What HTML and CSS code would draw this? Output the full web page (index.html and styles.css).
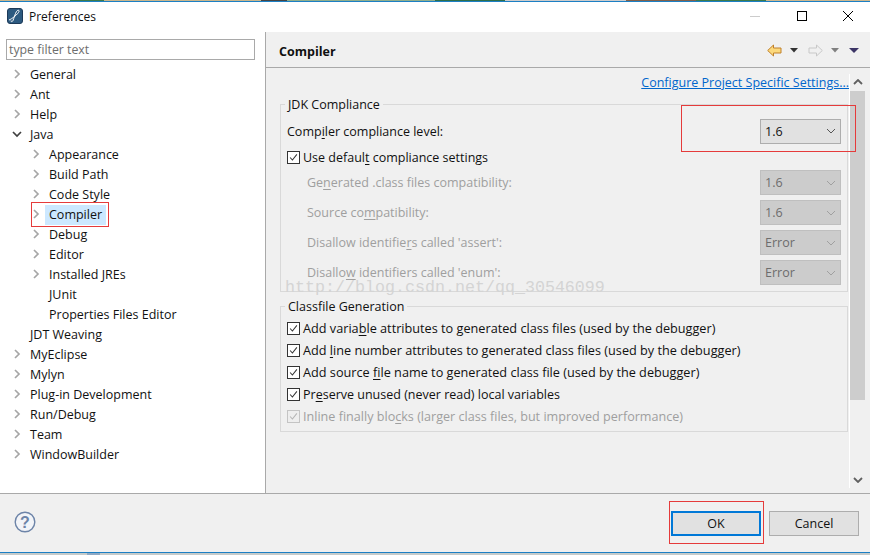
FILE: index.html
```html
<!DOCTYPE html>
<html lang="en">
<head>
<meta charset="utf-8">
<title>Preferences</title>
<link rel="stylesheet" href="styles.css">
</head>
<body>
<div class="window">
  <div class="topstrip"></div>
  <header class="titlebar">
    <div class="title-left">
      <svg class="app-icon" width="16" height="16" viewBox="0 0 16 16"><rect x="0.5" y="0.5" width="15" height="15" rx="2.5" fill="#2d5a80" stroke="#1d3a58"/><path d="M2 12C5 11 11 6 12 3.5C12.6 2 10.5 1.8 9.5 3.5C8 6 7 10 6 12.5C5.4 14 3.6 14 4 12.5" fill="none" stroke="#fff" stroke-width="1"/></svg>
      <span class="title-text">Preferences</span>
    </div>
    <div class="win-controls">
      <svg class="win-btn" width="16" height="16" viewBox="0 0 16 16"><path d="M2 8.5H12" stroke="#ccc" stroke-width="1"/></svg>
      <svg class="win-btn" width="16" height="16" viewBox="0 0 16 16"><rect x="3.5" y="3.5" width="9" height="9" fill="none" stroke="#000" stroke-width="1"/></svg>
      <svg class="win-btn" width="16" height="16" viewBox="0 0 16 16"><path d="M3 3L13 13M13 3L3 13" stroke="#000" stroke-width="1"/></svg>
    </div>
  </header>

  <div class="main">
    <aside class="sidebar">
      <div class="filter">type filter text</div>
      <ul class="tree">
        <li class="row"><svg class="tw" viewBox="0 0 10 10"><path d="M3 1L7 5L3 9" /></svg>General</li>
        <li class="row"><svg class="tw" viewBox="0 0 10 10"><path d="M3 1L7 5L3 9" /></svg>Ant</li>
        <li class="row"><svg class="tw" viewBox="0 0 10 10"><path d="M3 1L7 5L3 9" /></svg>Help</li>
        <li class="row"><svg class="tw open" viewBox="0 0 10 10"><path d="M1 3L5 7L9 3" /></svg>Java</li>
        <li class="row sub"><svg class="tw" viewBox="0 0 10 10"><path d="M3 1L7 5L3 9" /></svg>Appearance</li>
        <li class="row sub"><svg class="tw" viewBox="0 0 10 10"><path d="M3 1L7 5L3 9" /></svg>Build Path</li>
        <li class="row sub"><svg class="tw" viewBox="0 0 10 10"><path d="M3 1L7 5L3 9" /></svg>Code Style</li>
        <li class="row sub"><svg class="tw" viewBox="0 0 10 10"><path d="M3 1L7 5L3 9" /></svg><span class="selected">Compiler</span><span class="redbox redbox-tree"></span></li>
        <li class="row sub"><svg class="tw" viewBox="0 0 10 10"><path d="M3 1L7 5L3 9" /></svg>Debug</li>
        <li class="row sub"><svg class="tw" viewBox="0 0 10 10"><path d="M3 1L7 5L3 9" /></svg>Editor</li>
        <li class="row sub"><svg class="tw" viewBox="0 0 10 10"><path d="M3 1L7 5L3 9" /></svg>Installed JREs</li>
        <li class="row sub"><span class="tw-gap"></span>JUnit</li>
        <li class="row sub"><span class="tw-gap"></span>Properties Files Editor</li>
        <li class="row"><span class="tw-gap"></span>JDT Weaving</li>
        <li class="row"><svg class="tw" viewBox="0 0 10 10"><path d="M3 1L7 5L3 9" /></svg>MyEclipse</li>
        <li class="row"><svg class="tw" viewBox="0 0 10 10"><path d="M3 1L7 5L3 9" /></svg>Mylyn</li>
        <li class="row"><svg class="tw" viewBox="0 0 10 10"><path d="M3 1L7 5L3 9" /></svg>Plug-in Development</li>
        <li class="row"><svg class="tw" viewBox="0 0 10 10"><path d="M3 1L7 5L3 9" /></svg>Run/Debug</li>
        <li class="row"><svg class="tw" viewBox="0 0 10 10"><path d="M3 1L7 5L3 9" /></svg>Team</li>
        <li class="row"><svg class="tw" viewBox="0 0 10 10"><path d="M3 1L7 5L3 9" /></svg>WindowBuilder</li>
      </ul>
    </aside>

    <section class="content">
      <div class="page-head">
        <h1 class="page-title">Compiler</h1>
        <div class="nav-tools">
          <svg width="15" height="13" viewBox="0 0 15 13"><path d="M0.7 6.5L6.5 1V4H14V9H6.5V12Z" fill="#fcd97c" stroke="#c0802a"/></svg>
          <svg class="caret" width="8" height="5" viewBox="0 0 8 5"><path d="M0 0H8L4 4.5Z" fill="#333"/></svg>
          <svg class="fwd" width="15" height="13" viewBox="0 0 15 13"><path d="M14.3 6.5L8.5 1V4H1V9H8.5V12Z" fill="#f0f0f0" stroke="#c8c8c8"/></svg>
          <svg class="caret" width="8" height="5" viewBox="0 0 8 5"><path d="M0 0H8L4 4.5Z" fill="#808080"/></svg>
          <svg class="caret menu" width="10" height="5" viewBox="0 0 10 5"><path d="M0 0H10L5 5Z" fill="#3c3566"/></svg>
        </div>
      </div>

      <div class="page-body">
        <div class="scroll-area">
          <a class="config-link">Configure Project Specific Settings...</a>

          <div class="group group-jdk">
            <div class="legend">JDK Compliance</div>
            <div class="form-row first">
              <span>Comp<u>i</u>ler compliance level:</span>
              <div class="combo"><span>1.6</span><svg class="combo-arrow" viewBox="0 0 10 6"><path d="M1 1L5 5L9 1"/></svg></div>
            </div>
            <label class="check check-default"><span class="box"><svg viewBox="0 0 13 13"><path d="M2.5 6.5L5.2 9.5L10.5 2.8"/></svg></span><span>Use defaul<u>t</u> compliance settings</span></label>
            <div class="form-row disabled">
              <span>Ge<u>n</u>erated .class files compatibility:</span>
              <div class="combo off"><span>1.6</span><svg class="combo-arrow" viewBox="0 0 10 6"><path d="M1 1L5 5L9 1"/></svg></div>
            </div>
            <div class="form-row disabled">
              <span>Source co<u>m</u>patibility:</span>
              <div class="combo off"><span>1.6</span><svg class="combo-arrow" viewBox="0 0 10 6"><path d="M1 1L5 5L9 1"/></svg></div>
            </div>
            <div class="form-row disabled">
              <span>Disallow identifie<u>r</u>s called 'assert':</span>
              <div class="combo off"><span>Error</span><svg class="combo-arrow" viewBox="0 0 10 6"><path d="M1 1L5 5L9 1"/></svg></div>
            </div>
            <div class="form-row disabled">
              <span>Disallo<u>w</u> identifiers called 'enum':</span>
              <div class="combo off"><span>Error</span><svg class="combo-arrow" viewBox="0 0 10 6"><path d="M1 1L5 5L9 1"/></svg></div>
            </div>
          </div>

          <div class="group group-class">
            <div class="legend">Classfile Generation</div>
            <label class="check wide"><span class="box"><svg viewBox="0 0 13 13"><path d="M2.5 6.5L5.2 9.5L10.5 2.8"/></svg></span><span>Add varia<u>b</u>le attributes to generated class files (used by the debugger)</span></label>
            <label class="check wide"><span class="box"><svg viewBox="0 0 13 13"><path d="M2.5 6.5L5.2 9.5L10.5 2.8"/></svg></span><span>Add <u>l</u>ine number attributes to generated class files (used by the debugger)</span></label>
            <label class="check wide"><span class="box"><svg viewBox="0 0 13 13"><path d="M2.5 6.5L5.2 9.5L10.5 2.8"/></svg></span><span>Add source <u>f</u>ile name to generated class file (used by the debugger)</span></label>
            <label class="check"><span class="box"><svg viewBox="0 0 13 13"><path d="M2.5 6.5L5.2 9.5L10.5 2.8"/></svg></span><span>Pr<u>e</u>serve unused (never read) local variables</span></label>
            <label class="check off"><span class="box"><svg viewBox="0 0 13 13"><path d="M2.5 6.5L5.2 9.5L10.5 2.8"/></svg></span><span>Inline finally blo<u>c</u>ks (larger class files, but improved performance)</span></label>
          </div>
        </div>

        <div class="scrollbar">
          <svg class="sb-arrow" viewBox="0 0 10 6"><path d="M1 5L5 1L9 5"/></svg>
          <div class="sb-track"><div class="sb-thumb"></div></div>
          <svg class="sb-arrow" viewBox="0 0 10 6"><path d="M1 1L5 5L9 1"/></svg>
        </div>
      </div>
    </section>
  </div>

  <footer class="footer">
    <svg class="help" width="22" height="22" viewBox="0 0 22 22"><circle cx="11" cy="11" r="9.8" fill="#f2f4f8" stroke="#6d84a8" stroke-width="1.4"/><text x="11" y="16.5" text-anchor="middle" class="help-q">?</text></svg>
    <div class="buttons">
      <div class="btn default">OK<span class="redbox redbox-ok"></span></div>
      <div class="btn">Cancel</div>
    </div>
  </footer>
  <div class="bottom-strip"></div>

  <span class="redbox redbox-combo"></span>
  <span class="watermark">http://blog.csdn.net/qq_30546099</span>
</div>
</body>
</html>
```
FILE: styles.css
```css
* { box-sizing: border-box; }
html, body { margin: 0; padding: 0; }
body { width: 870px; height: 555px; overflow: hidden; background: #fff; font-family: "Open Sans", "Noto Sans", sans-serif; font-size: 12.5px; color: #111; }
u { text-underline-offset: 2px; }
.window { position: relative; width: 870px; height: 555px; display: flex; flex-direction: column; }
.topstrip { height: 2px; border-bottom: 1px solid #1c7fc4; background: linear-gradient(90deg, #c9b68c 0 8%, #3d7a4a 8% 12%, #c9b68c 12% 30%, #444 30% 33%, #8fae8c 33% 50%, #2e6e4a 50% 58%, #ccc 58% 72%, #80604a 72% 80%, #3d7a4a 80% 88%, #cdb88f 88%); }
.titlebar { height: 30px; display: flex; justify-content: space-between; align-items: center; background: #fff; padding-bottom: 2px; }
.title-left { display: flex; align-items: center; gap: 6px; padding-left: 7px; }
.title-text { font-size: 12px; }
.win-controls { display: flex; gap: 30px; padding-right: 14px; }
.win-btn { display: block; }
.main { flex: 1; display: flex; min-height: 0; }
.sidebar { width: 266px; border-right: 1px solid #a9a9a9; background: #fff; padding: 7px 0 0 6px; }
.filter { width: 249px; height: 21px; border: 1px solid #a9a9a9; padding-left: 2px; line-height: 20px; color: #6d6d6d; font-size: 12.3px; }
.tree { list-style: none; margin: 4px 0 0; padding: 0 0 0 8px; }
.row { position: relative; display: flex; align-items: center; height: 20px; white-space: nowrap; }
.row.sub { padding-left: 19px; }
.tw { width: 10px; height: 10px; margin: 0 8px 0 -2px; fill: none; stroke: #a6a6a6; stroke-width: 1.7; flex: none; }
.tw.open { stroke: #404040; }
.tw-gap { width: 16px; flex: none; }
.selected { background: #cce8ff; align-self: flex-start; height: 20px; margin-top: 1px; line-height: 19px; padding: 0 4px; margin-left: -4px; }
.redbox { position: absolute; border: 1px solid #e53b3b; pointer-events: none; }
.redbox-tree { left: 17px; top: -2px; width: 78px; height: 25px; }
.redbox-combo { left: 681px; top: 105px; width: 175px; height: 47px; }
.redbox-ok { left: -4px; top: -12px; width: 95px; height: 43px; }
.content { flex: 1; display: flex; flex-direction: column; background: #f0f0f0; min-width: 0; }
.page-head { height: 36px; flex: none; border-bottom: 1px solid #a9a9a9; display: flex; justify-content: space-between; align-items: center; padding: 2px 11px 0 13px; }
.page-title { margin: 1px 0 0; font-size: 12.5px; font-weight: 700; color: #111; }
.nav-tools { display: flex; align-items: center; }
.nav-tools svg { display: block; }
.caret { margin-left: 8px; }
.fwd { margin-left: 10px; }
.caret.menu { margin-left: 10px; }
.page-body { flex: 1; display: flex; min-height: 0; padding: 6px 0 5px; }
.scroll-area { width: 584px; flex: none; padding: 0 1px 0 14px; border-right: 1px solid #fff; }
.config-link { display: block; text-align: right; color: #0066cc; text-decoration: underline; line-height: 18px; margin-right: -1px; }
.group { position: relative; border: 1px solid #d9d9d9; padding: 0 6px; }
.legend { position: absolute; left: 4px; top: -8px; background: #f0f0f0; padding: 0 3px; line-height: 16px; }
.group-jdk { margin-top: 12px; height: 188px; padding-top: 13px; }
.group-class { margin-top: 14px; height: 126px; padding-top: 10px; }
.form-row { display: flex; justify-content: space-between; align-items: center; height: 25px; margin-bottom: 5px; }
.form-row.first { height: 26px; margin-bottom: 0; }
.form-row.disabled { color: #9f9f9f; padding-left: 20px; }
.combo { width: 81px; height: 25px; display: flex; justify-content: space-between; align-items: center; padding: 0 4px; border: 1px solid #adadad; background: #e1e1e1; color: #111; }
.combo.off { background: #cccccc; border-color: #bfbfbf; color: #6d6d6d; }
.combo-arrow { width: 10px; height: 6px; fill: none; stroke: #555; stroke-width: 1; }
.combo.off .combo-arrow { stroke: #a0a0a0; }
.check { display: flex; align-items: center; gap: 3px; height: 22px; white-space: nowrap; }
.check.wide { font-size: 12.7px; }
.check-default { height: 26px; }
.box { width: 13px; height: 13px; border: 1px solid #333; background: #fff; display: block; flex: none; }
.box svg { display: block; width: 11px; height: 11px; fill: none; stroke: #333; stroke-width: 1.2; }
.check.off { color: #9f9f9f; font-size: 12.6px; }
.check.off .box { border-color: #c4c4c4; background: #eee; }
.check.off .box svg { stroke: #b4b4b4; }
.scrollbar { width: 15px; flex: none; display: flex; flex-direction: column; align-items: center; }
.sb-arrow { width: 10px; height: 6px; fill: none; stroke: #606060; stroke-width: 1.8; margin: 5px 0 6px; flex: none; }
.sb-arrow:last-child { margin: 6px 0 5px; }
.sb-track { flex: 1; width: 15px; }
.sb-thumb { height: 309px; background: #cdcdcd; }
.footer { height: 59px; flex: none; position: relative; background: #f0f0f0; border-top: 1px solid #a9a9a9; display: flex; justify-content: space-between; align-items: flex-start; padding: 17px 11px 0 14px; }
.help { display: block; }
.help-q { font-size: 16px; font-weight: 700; fill: #6d84a8; font-family: "Liberation Sans", sans-serif; }
.buttons { display: flex; gap: 8px; }
.btn { position: relative; width: 90px; height: 25px; display: flex; align-items: center; justify-content: center; background: #e1e1e1; border: 1px solid #adadad; }
.btn.default { border: 2px solid #0078d7; }
.bottom-strip { height: 3px; flex: none; border-top: 1px solid #1c7fc4; background: linear-gradient(90deg, #c6cbca 0 10%, #8fa9c4 10% 11.5%, #c6cbca 11.5%); }
.watermark { position: absolute; left: 285px; top: 278px; font-family: "Liberation Mono", monospace; font-size: 16.67px; line-height: 20px; color: #d4d4d4; white-space: nowrap; pointer-events: none; }
```
